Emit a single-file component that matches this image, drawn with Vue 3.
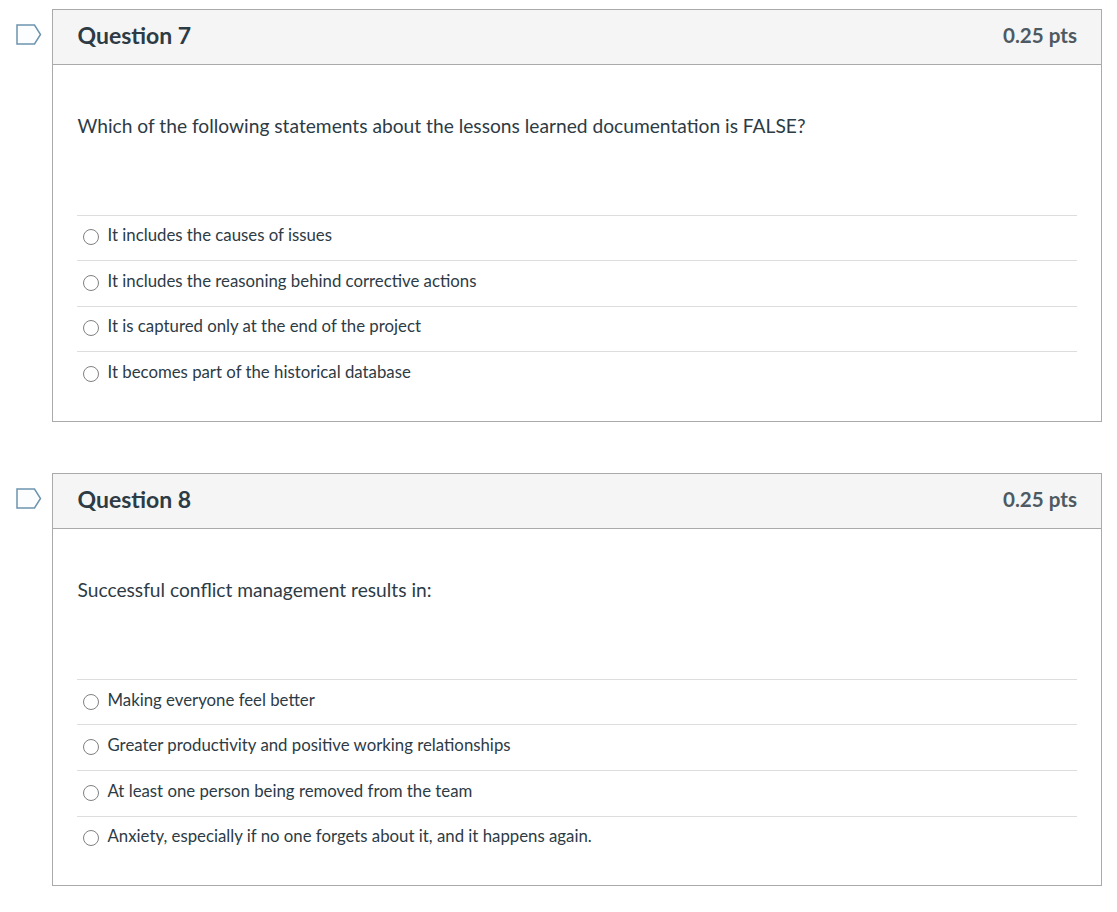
<script setup>
const questions = [
  {
    title: 'Question 7',
    text: 'Which of the following statements about the lessons learned documentation is FALSE?',
    answers: ['It includes the causes of issues', 'It includes the reasoning behind corrective actions', 'It is captured only at the end of the project', 'It becomes part of the historical database'],
  },
  {
    title: 'Question 8',
    text: 'Successful conflict management results in:',
    answers: ['Making everyone feel better', 'Greater productivity and positive working relationships', 'At least one person being removed from the team', 'Anxiety, especially if no one forgets about it, and it happens again.'],
  },
]
</script>

<template>
  <div class="page">
    <section v-for="q in questions" :key="q.title" class="item">
      <svg class="flag" width="26" height="21" viewBox="0 0 26 21">
        <path d="M1 1H18.5L24.5 10.5L18.5 20H1Z" fill="#fbfdfe" stroke="#6d94ae" stroke-width="1.5" />
      </svg>
      <div class="card">
        <header class="head">
          <h2 class="title">{{ q.title }}</h2>
          <span class="pts">0.25 pts</span>
        </header>
        <div class="body">
          <p class="text">{{ q.text }}</p>
          <div class="answers">
            <label v-for="a in q.answers" :key="a" class="answer">
              <span class="radio"></span>
              <span class="label">{{ a }}</span>
            </label>
          </div>
        </div>
      </div>
    </section>
  </div>
</template>

<style>
html, body { margin: 0; background: #fff; }
</style>

<style scoped>
.page {
  padding: 9px 15px 0 16px;
  display: flex;
  flex-direction: column;
  gap: 51.3px;
  font-family: Lato, "Open Sans", sans-serif;
  color: #2d3b45;
}
.item { display: flex; align-items: flex-start; }
.flag { margin-top: 15px; margin-right: 10px; flex: none; }
.card {
  flex: 1;
  border: 1px solid #aaa;
  box-sizing: border-box;
  height: 413px;
}
.head {
  height: 55px;
  box-sizing: border-box;
  background: #f5f5f5;
  border-bottom: 1px solid #aaa;
  padding: 0 24px 5px 24.5px;
  display: flex;
  align-items: center;
  justify-content: space-between;
}
.title { margin: 0; font-size: 23px; font-weight: 700; line-height: 30px; }
.pts { font-size: 20.6px; font-weight: 700; color: #4d5a63; line-height: 30px; }
.body { padding: 0 24px 0 24.5px; }
.text { margin: 0; padding-top: 48px; height: 101.6px; font-size: 19.2px; line-height: 26px; }
.answers { display: flex; flex-direction: column; margin-left: -0.5px; }
.answer {
  height: 45.55px;
  box-sizing: border-box;
  border-top: 1px solid #ddd;
  display: flex;
  align-items: center;
  padding-left: 6px;
  gap: 8.5px;
  font-size: 16.8px;
}
.label { position: relative; top: -3px; }
.radio {
  width: 16px;
  height: 16px;
  border: 1.5px solid #808080;
  border-radius: 50%;
  box-sizing: border-box;
  flex: none;
  margin-top: -1px;
}
</style>
